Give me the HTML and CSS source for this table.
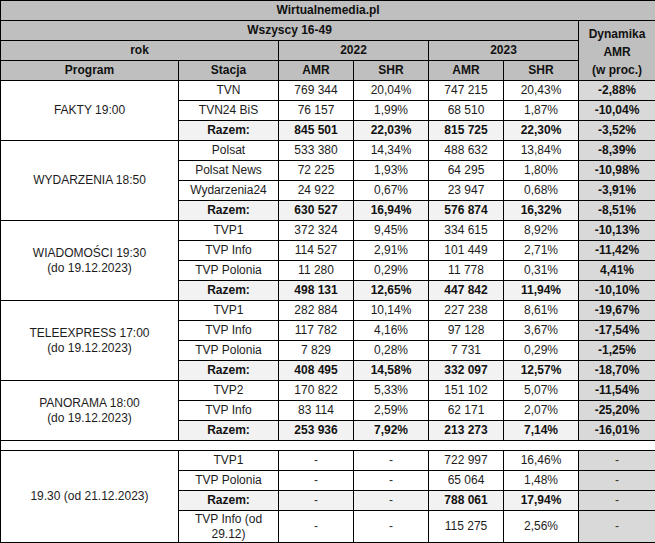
FILE: index.html
```html
<!DOCTYPE html>
<html lang="pl">
<head>
<meta charset="utf-8">
<title>Wirtualnemedia.pl</title>
<link rel="stylesheet" href="styles.css">
</head>
<body>
<table class="grid">
  <colgroup>
    <col class="c-prog"><col class="c-st"><col class="c-n"><col class="c-n"><col class="c-n"><col class="c-n"><col class="c-dyn">
  </colgroup>
  <tbody>
    <tr class="hdr"><td colspan="7" class="title">Wirtualnemedia.pl</td></tr>
    <tr class="hdr"><td colspan="6">Wszyscy 16-49</td><td rowspan="3" class="dynhead">Dynamika<br>AMR<br>(w proc.)</td></tr>
    <tr class="hdr"><td colspan="2">rok</td><td colspan="2">2022</td><td colspan="2">2023</td></tr>
    <tr class="hdr"><td>Program</td><td>Stacja</td><td>AMR</td><td>SHR</td><td>AMR</td><td>SHR</td></tr>

    <tr><td rowspan="3" class="prog">FAKTY 19:00</td><td>TVN</td><td>769 344</td><td>20,04%</td><td>747 215</td><td>20,43%</td><td class="dyn">-2,88%</td></tr>
    <tr><td>TVN24 BiS</td><td>76 157</td><td>1,99%</td><td>68 510</td><td>1,87%</td><td class="dyn">-10,04%</td></tr>
    <tr class="sum"><td>Razem:</td><td>845 501</td><td>22,03%</td><td>815 725</td><td>22,30%</td><td class="dyn">-3,52%</td></tr>

    <tr><td rowspan="4" class="prog">WYDARZENIA 18:50</td><td>Polsat</td><td>533 380</td><td>14,34%</td><td>488 632</td><td>13,84%</td><td class="dyn">-8,39%</td></tr>
    <tr><td>Polsat News</td><td>72 225</td><td>1,93%</td><td>64 295</td><td>1,80%</td><td class="dyn">-10,98%</td></tr>
    <tr><td>Wydarzenia24</td><td>24 922</td><td>0,67%</td><td>23 947</td><td>0,68%</td><td class="dyn">-3,91%</td></tr>
    <tr class="sum"><td>Razem:</td><td>630 527</td><td>16,94%</td><td>576 874</td><td>16,32%</td><td class="dyn">-8,51%</td></tr>

    <tr><td rowspan="4" class="prog">WIADOMOŚCI 19:30<br>(do 19.12.2023)</td><td>TVP1</td><td>372 324</td><td>9,45%</td><td>334 615</td><td>8,92%</td><td class="dyn">-10,13%</td></tr>
    <tr><td>TVP Info</td><td>114 527</td><td>2,91%</td><td>101 449</td><td>2,71%</td><td class="dyn">-11,42%</td></tr>
    <tr><td>TVP Polonia</td><td>11 280</td><td>0,29%</td><td>11 778</td><td>0,31%</td><td class="dyn">4,41%</td></tr>
    <tr class="sum"><td>Razem:</td><td>498 131</td><td>12,65%</td><td>447 842</td><td>11,94%</td><td class="dyn">-10,10%</td></tr>

    <tr><td rowspan="4" class="prog">TELEEXPRESS 17:00<br>(do 19.12.2023)</td><td>TVP1</td><td>282 884</td><td>10,14%</td><td>227 238</td><td>8,61%</td><td class="dyn">-19,67%</td></tr>
    <tr><td>TVP Info</td><td>117 782</td><td>4,16%</td><td>97 128</td><td>3,67%</td><td class="dyn">-17,54%</td></tr>
    <tr><td>TVP Polonia</td><td>7 829</td><td>0,28%</td><td>7 731</td><td>0,29%</td><td class="dyn">-1,25%</td></tr>
    <tr class="sum"><td>Razem:</td><td>408 495</td><td>14,58%</td><td>332 097</td><td>12,57%</td><td class="dyn">-18,70%</td></tr>

    <tr><td rowspan="3" class="prog">PANORAMA 18:00<br>(do 19.12.2023)</td><td>TVP2</td><td>170 822</td><td>5,33%</td><td>151 102</td><td>5,07%</td><td class="dyn">-11,54%</td></tr>
    <tr><td>TVP Info</td><td>83 114</td><td>2,59%</td><td>62 171</td><td>2,07%</td><td class="dyn">-25,20%</td></tr>
    <tr class="sum"><td>Razem:</td><td>253 936</td><td>7,92%</td><td>213 273</td><td>7,14%</td><td class="dyn">-16,01%</td></tr>

    <tr class="gap"><td colspan="7"></td></tr>

    <tr><td rowspan="4" class="prog">19.30 (od 21.12.2023)</td><td>TVP1</td><td class="na">-</td><td class="na">-</td><td>722 997</td><td>16,46%</td><td class="dyn na">-</td></tr>
    <tr><td>TVP Polonia</td><td class="na">-</td><td class="na">-</td><td>65 064</td><td>1,48%</td><td class="dyn na">-</td></tr>
    <tr class="sum"><td>Razem:</td><td class="na">-</td><td class="na">-</td><td>788 061</td><td>17,94%</td><td class="dyn na">-</td></tr>
    <tr class="tall"><td>TVP Info (od<br>29.12)</td><td class="na">-</td><td class="na">-</td><td>115 275</td><td>2,56%</td><td class="dyn na">-</td></tr>
  </tbody>
</table>
</body>
</html>
```

FILE: styles.css
```css
html, body {
  margin: 0;
  padding: 0;
  background: #ffffff;
}

.grid {
  border-collapse: collapse;
  table-layout: fixed;
  width: 655px;
  font-family: "Liberation Sans", Arial, sans-serif;
  font-size: 12px;
  color: #1c1c1c;
}

.c-prog { width: 178px; }
.c-st { width: 100px; }
.c-n { width: 75px; }
.c-dyn { width: 77px; }

.grid td {
  border: 1px solid #000;
  text-align: center;
  vertical-align: middle;
  padding: 0 2px;
  height: 19px;
  line-height: 15px;
  white-space: nowrap;
  overflow: hidden;
}

.hdr td {
  background: #bfbfbf;
  font-weight: bold;
  color: #111;
}

.grid td.dynhead {
  line-height: 18px;
  padding-top: 4px;
  vertical-align: top;
}

.sum td {
  background: #f2f2f2;
  font-weight: bold;
  color: #111;
}

.grid td.dyn {
  background: #d9d9d9;
  font-weight: bold;
  color: #111;
}

.grid td.na {
  font-weight: normal;
  color: #333;
}

.grid td.prog {
  background: #fff;
  font-weight: normal;
  color: #1c1c1c;
}

.gap td {
  height: 9px;
  padding: 0;
  line-height: 9px;
}

.tall td {
  height: 31px;
}
```
